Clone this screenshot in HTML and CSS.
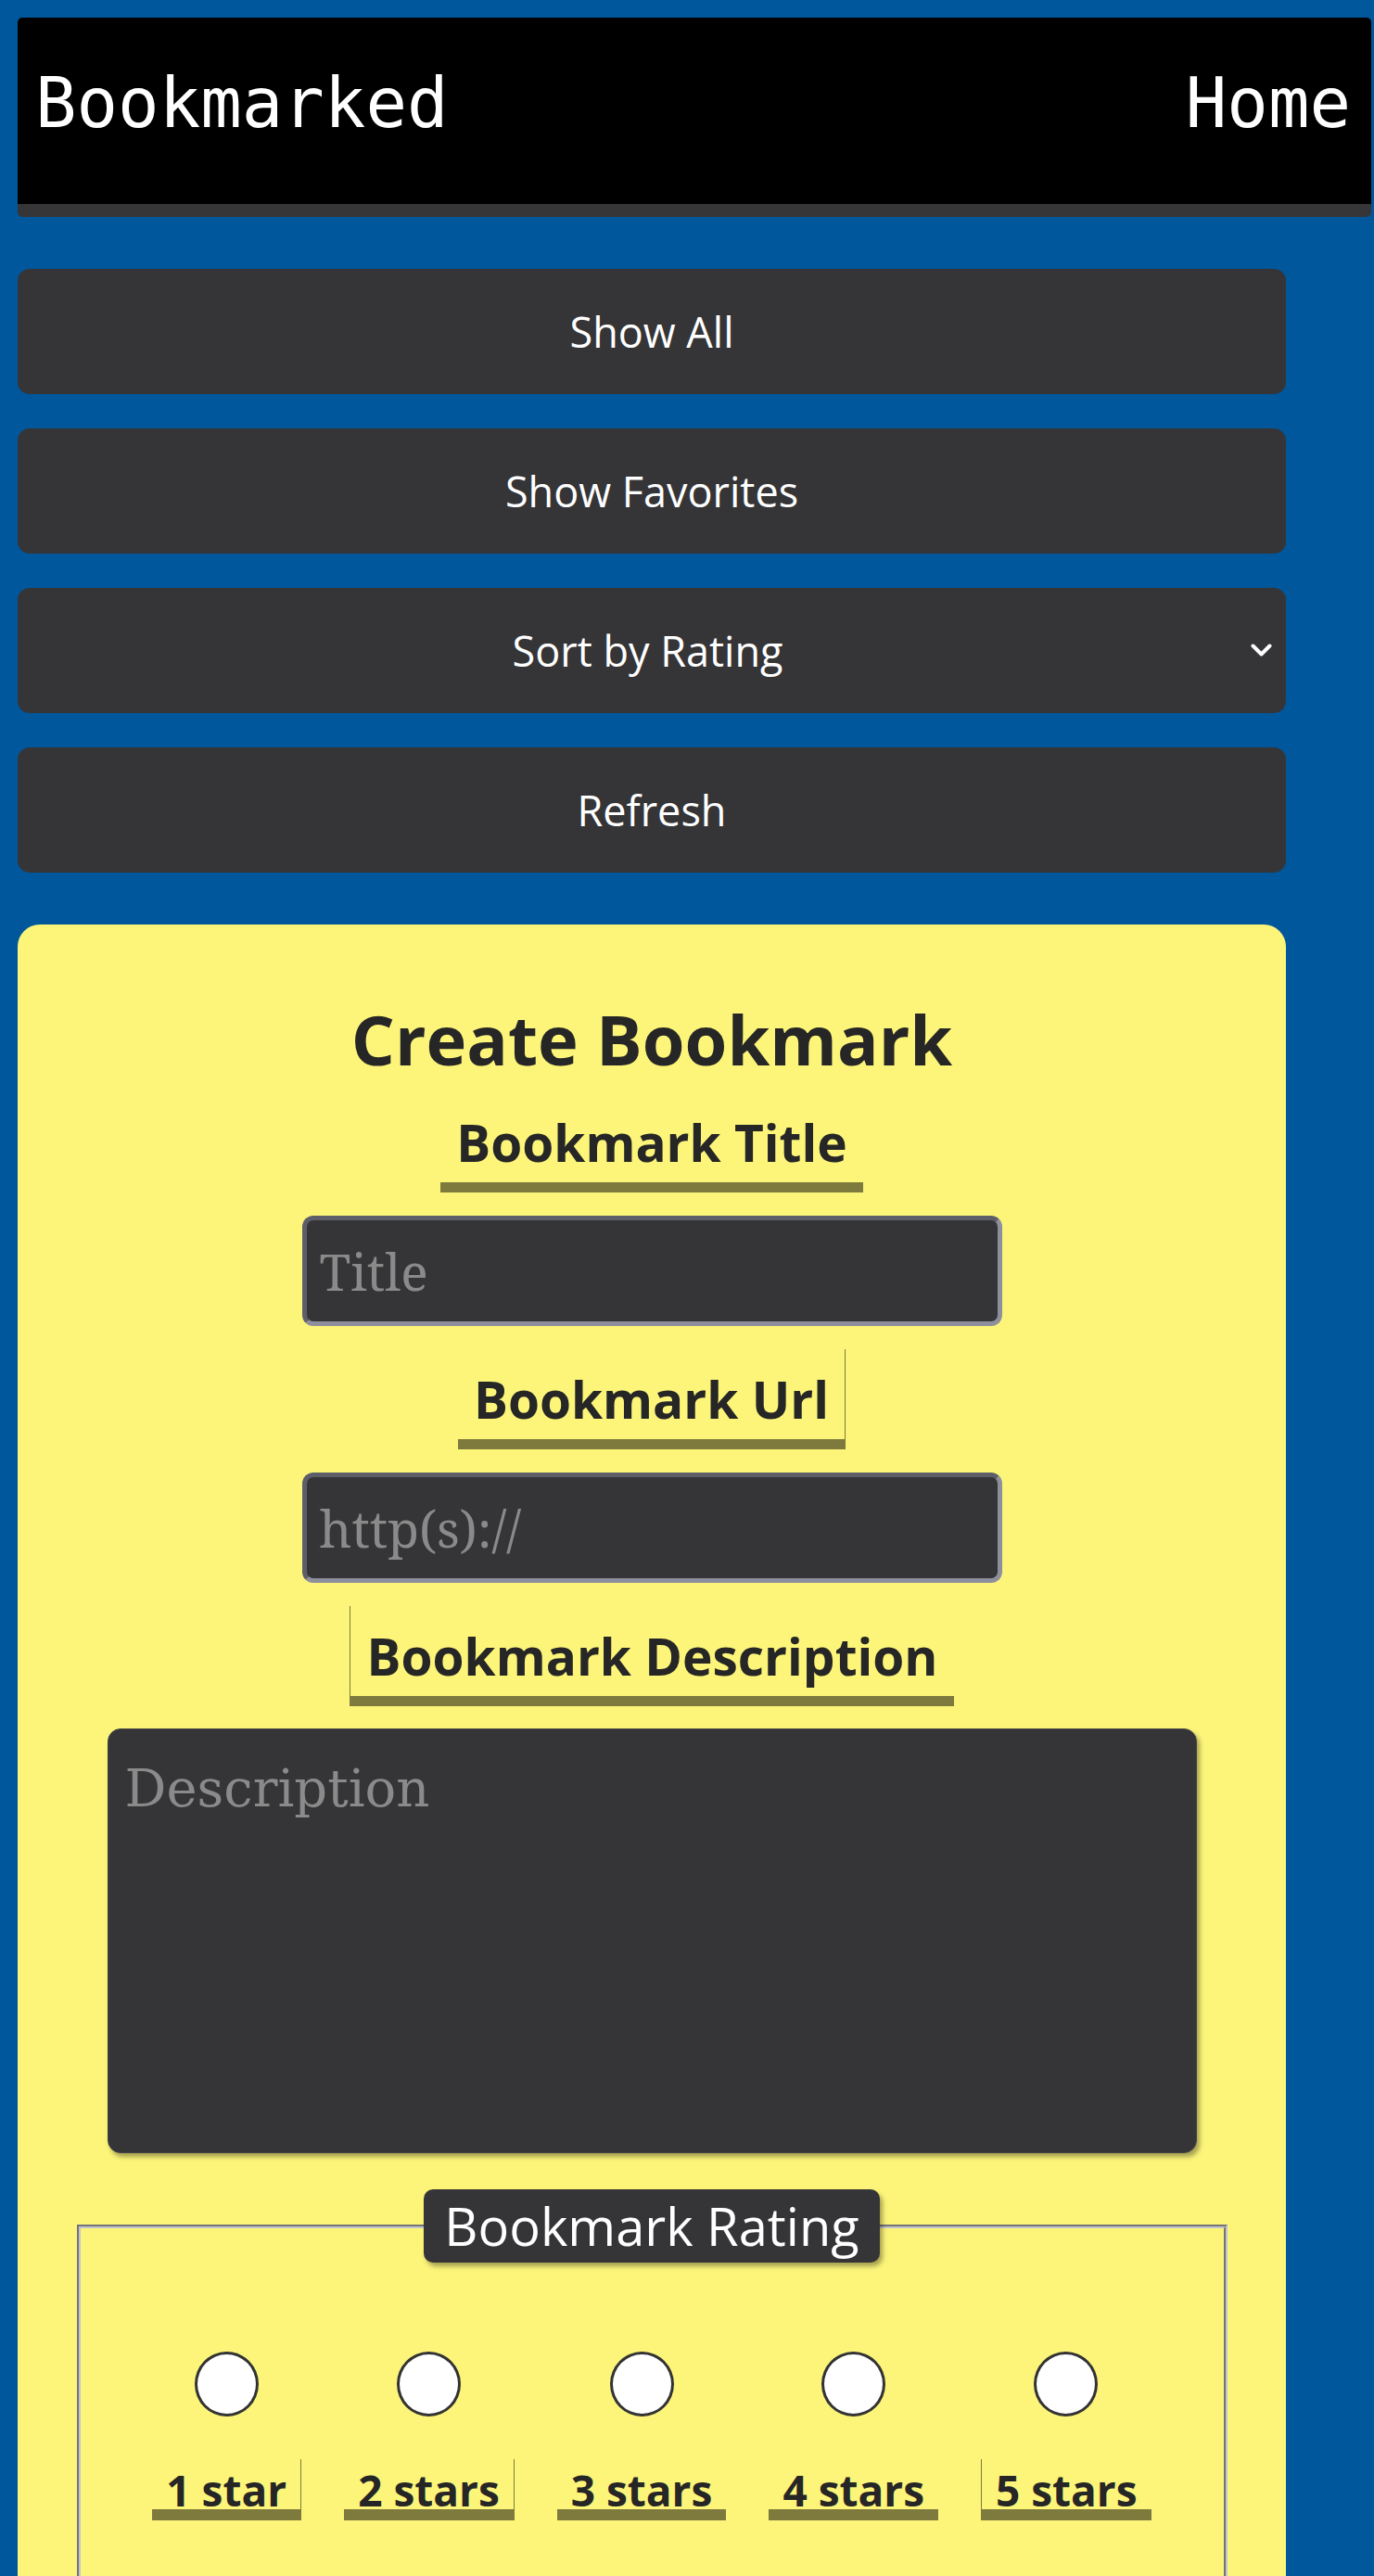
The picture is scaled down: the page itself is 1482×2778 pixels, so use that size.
FILE: index.html
```html
<!DOCTYPE html>
<html lang="en">
<head>
<meta charset="utf-8">
<title>Bookmarked</title>
<link rel="stylesheet" href="styles.css">
</head>
<body>
<div class="page">
  <header class="topbar">
    <span class="brand">Bookmarked</span>
    <a class="nav-link" href="#">Home</a>
  </header>

  <nav class="controls">
    <button class="ctrl-btn" type="button">Show All</button>
    <button class="ctrl-btn" type="button">Show Favorites</button>
    <div class="select-wrap">
      <select class="ctrl-btn ctrl-select">
        <option>Sort by Rating</option>
        <option>Sort by Title</option>
      </select>
      <svg class="chevron" viewBox="0 0 23 15" aria-hidden="true"><polyline points="2.5,2.5 11.5,11.5 20.5,2.5"/></svg>
    </div>
    <button class="ctrl-btn" type="button">Refresh</button>
  </nav>

  <section class="card">
    <h2 class="card-title">Create Bookmark</h2>

    <label class="field-label first" for="bm-title">Bookmark Title</label>
    <input id="bm-title" class="field-input" type="text" placeholder="Title">

    <label class="field-label edge-right" for="bm-url">Bookmark Url</label>
    <input id="bm-url" class="field-input" type="text" placeholder="http(s)://">

    <label class="field-label edge-left" for="bm-desc">Bookmark Description</label>
    <textarea id="bm-desc" class="field-area" placeholder="Description"></textarea>

    <fieldset class="rating">
      <legend class="rating-legend">Bookmark Rating</legend>
      <div class="rating-row">
        <div class="rating-opt">
          <input class="rating-radio" type="radio" name="rating" id="r1">
          <label class="rating-label edge-right" for="r1">1 star</label>
        </div>
        <div class="rating-opt">
          <input class="rating-radio" type="radio" name="rating" id="r2">
          <label class="rating-label edge-right" for="r2">2 stars</label>
        </div>
        <div class="rating-opt">
          <input class="rating-radio" type="radio" name="rating" id="r3">
          <label class="rating-label" for="r3">3 stars</label>
        </div>
        <div class="rating-opt">
          <input class="rating-radio" type="radio" name="rating" id="r4">
          <label class="rating-label" for="r4">4 stars</label>
        </div>
        <div class="rating-opt">
          <input class="rating-radio" type="radio" name="rating" id="r5">
          <label class="rating-label edge-left" for="r5">5 stars</label>
        </div>
      </div>
    </fieldset>
  </section>
</div>
</body>
</html>
```

FILE: styles.css
```css
* { box-sizing: border-box; }

html, body { margin: 0; }

body {
  background: #01579b;
  font-family: "Open Sans", "Noto Sans", sans-serif;
}

.page {
  padding: 19px 3px 0 19px;
}

/* ---------- header ---------- */
.topbar {
  display: flex;
  justify-content: space-between;
  align-items: flex-start;
  background: #000;
  border-bottom: 14px solid #363638;
  border-radius: 5px;
  padding: 49px 22px 66px 19px;
  font-family: "DejaVu Sans Mono", monospace;
  font-size: 74px;
  line-height: normal;
  color: #fff;
}

.nav-link {
  color: #fff;
  text-decoration: none;
}

/* ---------- controls ---------- */
.controls {
  width: 1368px;
  margin-top: 56px;
  display: flex;
  flex-direction: column;
  gap: 37px;
}

.ctrl-btn {
  display: block;
  width: 100%;
  height: 135px;
  margin: 0;
  border: 0;
  border-radius: 13px;
  background: #353537;
  color: #fff;
  font-family: "Open Sans", "Noto Sans", sans-serif;
  font-size: 45px;
  text-align: center;
}

.select-wrap {
  position: relative;
}

.ctrl-select {
  appearance: none;
  -webkit-appearance: none;
  text-align: center;
  text-align-last: center;
  padding: 0 9px 0 0;
}

.chevron {
  position: absolute;
  right: 15px;
  top: 60px;
  width: 23px;
  height: 15px;
  fill: none;
  stroke: #fff;
  stroke-width: 4;
  stroke-linecap: round;
  stroke-linejoin: round;
  pointer-events: none;
}

/* ---------- card ---------- */
.card {
  width: 1368px;
  margin-top: 56px;
  background: #fcf57a;
  border-radius: 24px;
  padding: 73px 0 60px;
  display: flex;
  flex-direction: column;
  align-items: center;
  color: #262626;
}

.card-title {
  margin: 0 0 7px;
  font-size: 74px;
  font-weight: 700;
  line-height: normal;
}

.field-label {
  margin-top: 25px;
  padding: 16px 17px 6px;
  font-size: 55px;
  font-weight: 700;
  line-height: normal;
  border-bottom: 11px solid rgba(0, 0, 0, 0.5);
}

.field-label.first {
  margin-top: 0;
}

.edge-right { border-right: 1px solid rgba(0, 0, 0, 0.5); }
.edge-left { border-left: 1px solid rgba(0, 0, 0, 0.5); }

.field-input {
  width: 755px;
  height: 119px;
  margin-top: 25px;
  padding: 0 14px;
  border: 5px solid;
  border-color: #5d5e68 #8e8f9d #8e8f9d #5d5e68;
  border-radius: 12px;
  background: #353537;
  color: #e6e6e6;
  font-family: "Noto Serif", "DejaVu Serif", serif;
  font-size: 55px;
}

.field-input::placeholder,
.field-area::placeholder {
  color: #8a8a8a;
}

.field-area {
  display: block;
  width: 1175px;
  height: 458px;
  margin-top: 24px;
  padding: 31px 18px;
  border: 1px solid #444446;
  border-radius: 14px;
  background: #353537;
  color: #e6e6e6;
  font-family: "DejaVu Serif", serif;
  font-size: 56px;
  line-height: normal;
  resize: none;
  box-shadow: 3px 4px 5px rgba(0, 0, 0, 0.35);
}

/* ---------- rating ---------- */
.rating {
  width: 1241px;
  margin: 39px 0 0;
  padding: 0 0 80px;
  border: 4px groove #c4c4cc;
}

.rating-legend {
  margin: 0 auto;
  padding: 1px 22px 2px;
  background: #353537;
  color: #fff;
  border-radius: 10px;
  font-size: 56px;
  line-height: normal;
  box-shadow: 3px 4px 5px rgba(0, 0, 0, 0.35);
}

.rating-row {
  display: flex;
  justify-content: center;
  gap: 46px;
  margin-top: 96px;
}

.rating-opt {
  display: flex;
  flex-direction: column;
  align-items: center;
}

.rating-radio {
  appearance: none;
  -webkit-appearance: none;
  width: 69px;
  height: 70px;
  margin: 0;
  border: 3px solid #333;
  border-radius: 50%;
  background: #fff;
}

.rating-label {
  margin-top: 46px;
  padding: 12px 15px 0;
  font-size: 46px;
  font-weight: 700;
  line-height: 42px;
  border-bottom: 12px solid rgba(0, 0, 0, 0.5);
}
```
